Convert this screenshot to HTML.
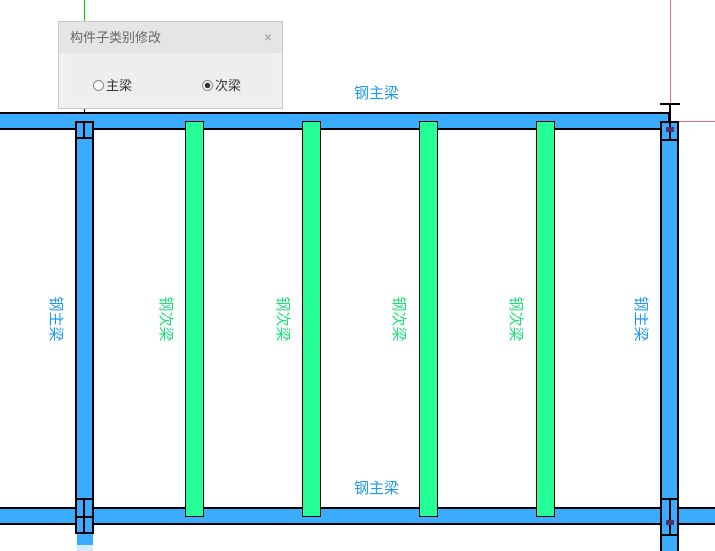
<!DOCTYPE html>
<html style="overflow:hidden;width:715px;height:551px"><head><meta charset="utf-8"><style>
body{margin:0;width:715px;height:551px;overflow:hidden;background:#fff;position:relative;font-family:"Liberation Sans","Noto Sans CJK SC",sans-serif}
.a{position:absolute;box-sizing:border-box}
.b{background:#3aabff;border:2px solid #000}
.g{background:#26ff98;border:1.5px solid #000}
.vl{position:absolute;font-size:15px;transform:rotate(90deg);transform-origin:center;white-space:nowrap;width:48px;height:16px;line-height:16px;text-align:center}
</style></head><body>
<div class="a" style="left:670px;top:0;width:1px;height:121px;background:#e87070"></div>
<div class="a" style="left:679px;top:121px;width:36px;height:1px;background:#e87070"></div>
<div class="a" style="left:84px;top:0;width:1px;height:21px;background:#00d000"></div>
<div class="a" style="left:84px;top:108px;width:1px;height:10px;background:#000"></div>
<div class="a b" style="left:-2px;top:112px;width:672px;height:18px"></div>
<div class="a b" style="left:-2px;top:507px;width:719px;height:18px"></div>
<div class="a b" style="left:75px;top:121px;width:19px;height:379px"></div>
<div class="a" style="left:75px;top:121px;width:19px;height:18px;border:2px solid #000"></div>
<div class="a" style="left:83px;top:121px;width:2px;height:18px;background:#000"></div>
<div class="a b" style="left:75px;top:498px;width:19px;height:36px"></div>
<div class="a" style="left:83px;top:498px;width:2px;height:36px;background:#000"></div>
<div class="a" style="left:75px;top:516px;width:19px;height:2px;background:#000"></div>
<div class="a" style="left:77px;top:534px;width:16px;height:11px;background:#3aabff"></div>
<div class="a" style="left:77px;top:545px;width:16px;height:6px;background:#d4ebfc"></div>
<div class="a b" style="left:660px;top:121px;width:19px;height:430px;border-bottom:none"></div>
<div class="a" style="left:660px;top:139px;width:19px;height:2px;background:#000"></div>
<div class="a" style="left:660px;top:498px;width:19px;height:2px;background:#000"></div>
<div class="a" style="left:660px;top:534px;width:19px;height:2px;background:#000"></div>
<div class="a" style="left:669px;top:104px;width:2px;height:36px;background:#000"></div>
<div class="a" style="left:660px;top:103px;width:20px;height:2px;background:#000"></div>
<div class="a" style="left:666px;top:127px;width:8px;height:5px;background:#55306a"></div>
<div class="a" style="left:669px;top:498px;width:2px;height:36px;background:#000"></div>
<div class="a" style="left:666px;top:520px;width:8px;height:5px;background:#55306a"></div>
<div class="a g" style="left:185px;top:121px;width:19px;height:396px"></div>
<div class="a g" style="left:302px;top:121px;width:19px;height:396px"></div>
<div class="a g" style="left:419px;top:121px;width:19px;height:396px"></div>
<div class="a g" style="left:536px;top:121px;width:19px;height:396px"></div>
<div class="a" style="left:354px;top:82px;font-size:15px;color:#1e9af0">钢主梁</div>
<div class="a" style="left:354px;top:477px;font-size:15px;color:#1e9af0">钢主梁</div>
<div class="vl" style="left:31px;top:311px;color:#1e9af0">钢主梁</div>
<div class="vl" style="left:141px;top:311px;color:#1ee07a">钢次梁</div>
<div class="vl" style="left:258px;top:311px;color:#1ee07a">钢次梁</div>
<div class="vl" style="left:374px;top:311px;color:#1ee07a">钢次梁</div>
<div class="vl" style="left:491px;top:311px;color:#1ee07a">钢次梁</div>
<div class="vl" style="left:616px;top:311px;color:#1e9af0">钢主梁</div>
<div class="a" style="left:58px;top:21px;width:225px;height:88px;border:1px solid #c8c8c8;background:#f0f0f0">
 <div style="height:31px;background:#e5e5e5;font-size:13px;color:#666;line-height:31px;padding-left:11px;position:relative">构件子类别修改<span style="position:absolute;right:10px;top:0;color:#999;font-size:14px">×</span></div>
 <div style="position:absolute;left:7px;top:31px;width:208px;height:47px;background:#eeeeee"></div>
 <div style="position:absolute;left:34px;top:53px;font-size:13px;color:#333"><span style="display:inline-block;width:9px;height:9px;border:1px solid #888;border-radius:50%;background:#fff;vertical-align:-1px;margin-right:2px"></span>主梁</div>
 <div style="position:absolute;left:143px;top:53px;font-size:13px;color:#333"><span style="display:inline-block;width:9px;height:9px;border:1px solid #888;border-radius:50%;background:radial-gradient(circle,#333 2.5px,#fff 3px);vertical-align:-1px;margin-right:2px"></span>次梁</div>
</div>
</body></html>
